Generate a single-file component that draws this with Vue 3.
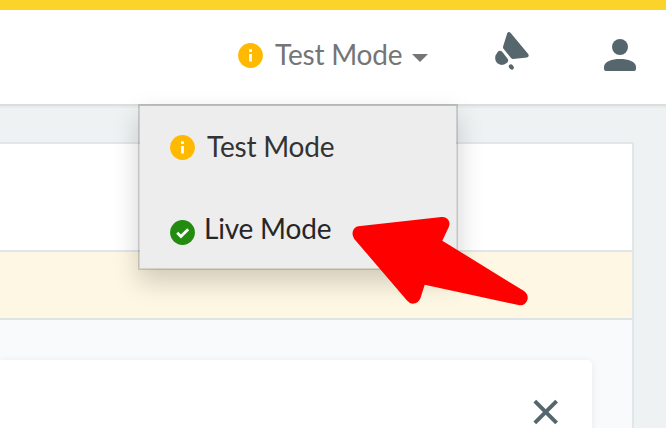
<script setup>
const modes = [
  { key: 'test', label: 'Test Mode' },
  { key: 'live', label: 'Live Mode' },
]
</script>

<template>
  <div class="page">
    <header class="header">
      <button class="mode">
        <svg class="badge" viewBox="0 0 25 25">
          <circle cx="12.5" cy="12.5" r="12.4" fill="#ffb900" />
          <path d="M11.1 6.2h2.8v2.7h-2.8zM11.1 11.1h2.8v7.5h-2.8z" fill="#fff" />
        </svg>
        <span class="mode-label">Test Mode</span>
        <svg class="caret" viewBox="0 0 16 8"><path d="M0 0h16L8 8z" fill="#757575" /></svg>
      </button>
      <svg class="horn" viewBox="0 0 36 40" fill="#56666d">
        <path d="M12.3 2.1Q13.9 0 15.7 2L33.4 23.3Q34.4 25.6 32 26.4L18 28Q16.8 28 16 27L8.5 17.8Q7.9 17 8 15.8z" />
        <path d="M3 20.6Q5 19 7.2 20.8L12.8 28Q13.8 30 12.3 31.6Q7.5 36 2.4 32.2Q-1 28.8 .7 24.2Z" />
        <ellipse cx="16.3" cy="36" rx="2.2" ry="2.9" transform="rotate(-38 16.3 36)" />
      </svg>
      <svg class="user" viewBox="0 0 32 32" fill="#56666d">
        <circle cx="16" cy="8" r="8" />
        <path d="M0 28c0-5.4 8-8 16-8s16 2.6 16 8v2q0 2-2 2H2q-2 0-2-2z" />
      </svg>
    </header>

    <main class="panel">
      <section class="intro"></section>
      <section class="notice"></section>
      <section class="content">
        <div class="card">
          <svg class="close" viewBox="0 0 26 26">
            <path d="M1.8 2.1l21.8 21.8M23.6 2.1L1.8 23.9" stroke="#56666d" stroke-width="3.9" />
          </svg>
        </div>
      </section>
    </main>

    <div class="menu">
      <div v-for="m in modes" :key="m.key" class="item" :class="m.key">
        <svg class="badge" viewBox="0 0 25 25">
          <circle cx="12.5" cy="12.5" r="12.4" :fill="m.key === 'test' ? '#ffb900' : '#228b10'" />
          <path v-if="m.key === 'test'" d="M11.1 6.2h2.8v2.7h-2.8zM11.1 11.1h2.8v7.5h-2.8z" fill="#fff" />
          <path v-else d="M7.2 12.7l3.7 3.8 7.3-7.3" fill="none" stroke="#fff" stroke-width="2.8" />
        </svg>
        <span>{{ m.label }}</span>
      </div>
    </div>

    <svg class="arrow" viewBox="350 214 182 94">
      <path d="M358.3 226.3L441.5 217.1Q446 216.8 448.3 220Q450.4 223 448.8 227L442.3 240.7L524 291Q528.6 294.5 527.5 299.5Q525.5 305.8 519.5 305.2L424.7 284.7L420.5 298Q418.3 303.7 412.8 303.7Q409.4 303.5 407 300.5L354.3 239Q351.6 235 353 230.8Q354.5 227 358.3 226.3Z" fill="#f00" />
    </svg>
  </div>
</template>

<style>
body { margin: 0; }
</style>

<style scoped>
.page {
  position: relative;
  width: 666px;
  height: 428px;
  overflow: hidden;
  background: #eef2f3;
  font-family: Lato, "Liberation Sans", sans-serif;
  font-size: 28px;
  letter-spacing: -0.2px;
}
.header {
  box-sizing: border-box;
  display: flex;
  align-items: flex-start;
  height: 106px;
  padding-left: 238px;
  border-top: 10px solid #fad42a;
  border-bottom: 2px solid #ddd;
  background: #fff;
  box-shadow: 0 2px 0 #e7ebeb;
}
.mode {
  display: flex;
  align-items: flex-start;
  width: 190px;
  padding: 28px 0 0;
  border: 0;
  background: none;
  font: inherit;
  letter-spacing: inherit;
  color: #757575;
}
.badge {
  flex: none;
  width: 25px;
  height: 25px;
}
.mode .badge { margin-top: 5px; }
.mode-label {
  width: 138px;
  margin: -1px 0 0 12px;
  line-height: 34px;
  text-align: left;
  white-space: nowrap;
}
.caret {
  flex: none;
  width: 16px;
  height: 8px;
  margin: 16px 0 0 -1px;
}
.horn {
  width: 36px;
  height: 40px;
  margin: 21px 0 0 67px;
}
.user {
  width: 32px;
  height: 32px;
  margin: 29px 0 0 73px;
}
.panel {
  box-sizing: border-box;
  width: 634px;
  height: 286px;
  margin-top: 36px;
  border: solid #e1e6e8;
  border-width: 2px 2px 0 0;
}
.intro {
  height: 106px;
  border-bottom: 2px solid #e1e6e8;
  background: #fff;
}
.notice {
  height: 66px;
  border-bottom: 2px solid #dde4e5;
  background: #fdf7e3;
}
.content {
  box-sizing: border-box;
  height: 108px;
  padding: 40px 40px 0 0;
  background: #f8fafc;
}
.card {
  box-sizing: border-box;
  display: flex;
  justify-content: flex-end;
  height: 90px;
  padding: 39px 33px 0 0;
  border-radius: 0 5px 0 0;
  background: #fff;
  box-shadow: 0 1px 8px rgba(0, 0, 0, 0.07);
}
.close {
  width: 26px;
  height: 26px;
}
.menu {
  position: absolute;
  left: 138px;
  top: 104px;
  box-sizing: border-box;
  width: 320px;
  height: 166px;
  padding: 25px 0 0 30px;
  border: 2px solid rgba(0, 0, 0, 0.15);
  background: #ededed;
  background-clip: padding-box;
  box-shadow: 0 12px 24px rgba(0, 0, 0, 0.175);
}
.item {
  display: flex;
  height: 82px;
  line-height: 34px;
  white-space: nowrap;
}
.item span { margin-top: -2px; }
.test { color: #333; }
.live { color: #262626; }
.test .badge { margin: 4px 12px 0 0; }
.live .badge { margin: 7px 9px 0 0; }
.arrow {
  position: absolute;
  left: 350px;
  top: 214px;
  width: 182px;
  height: 94px;
}
</style>
